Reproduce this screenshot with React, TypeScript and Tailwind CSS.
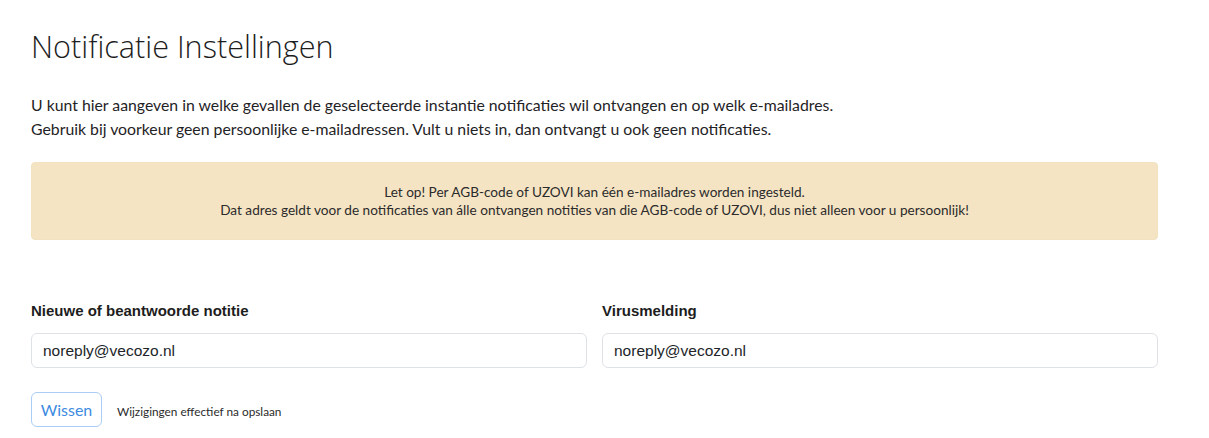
import React from 'react';

const body = { fontFamily: 'Lato, "Open Sans", sans-serif' };

export default function App() {
  return (
    <div className="min-h-screen bg-white text-[#212529] pl-[31px] pr-[51px] pt-[27px]" style={body}>
      {/* ---------- HEADER ---------- */}
      <h1
        className="text-[30.6px] leading-[38px] font-light text-[#1d1d1d]"
        style={{ fontFamily: '"Open Sans", sans-serif' }}
      >
        Notificatie Instellingen
      </h1>

      <div className="mt-[28px] text-[15.8px] leading-[24px] text-[#1f2326]">
        <p>U kunt hier aangeven in welke gevallen de geselecteerde instantie notificaties wil ontvangen en op welk e-mailadres.</p>
        <p>Gebruik bij voorkeur geen persoonlijke e-mailadressen. Vult u niets in, dan ontvangt u ook geen notificaties.</p>
      </div>

      {/* ---------- ALERT ---------- */}
      <div className="mt-[21px] h-[78px] rounded-[4px] border border-[#f3e2c0] bg-[#f5e4c3] flex flex-col items-center justify-center text-[13.6px] leading-[18px] text-[#2b2b2b]">
        <p>Let op! Per AGB-code of UZOVI kan één e-mailadres worden ingesteld.</p>
        <p>Dat adres geldt voor de notificaties van álle ontvangen notities van die AGB-code of UZOVI, dus niet alleen voor u persoonlijk!</p>
      </div>

      {/* ---------- FORM ---------- */}
      <div className="mt-[61px] grid grid-cols-2 gap-[15px]" style={{ fontFamily: '"Liberation Sans", Arial, sans-serif' }}>
        <div>
          <label className="block text-[15px] font-bold leading-[20px] text-[#1d1d1d]">Nieuwe of beantwoorde notitie</label>
          <input
            className="mt-[12px] w-full h-[35px] rounded-[6px] border border-[#dee2e6] px-[11px] text-[15.5px] text-[#212529] outline-none"
            defaultValue="noreply@vecozo.nl"
          />
        </div>
        <div>
          <label className="block text-[15px] font-bold leading-[20px] text-[#1d1d1d]">Virusmelding</label>
          <input
            className="mt-[12px] w-full h-[35px] rounded-[6px] border border-[#dee2e6] px-[11px] text-[15.5px] text-[#212529] outline-none"
            defaultValue="noreply@vecozo.nl"
          />
        </div>
      </div>

      <div className="mt-[24px] flex items-center gap-[15px]">
        <button className="h-[35px] w-[71px] rounded-[6px] border border-[#a9cdf5] bg-white text-[16px] text-[#3d8be0]">
          Wissen
        </button>
        <span className="mt-[5px] text-[11.8px] text-[#2b2b2b]">Wijzigingen effectief na opslaan</span>
      </div>
    </div>
  );
}
